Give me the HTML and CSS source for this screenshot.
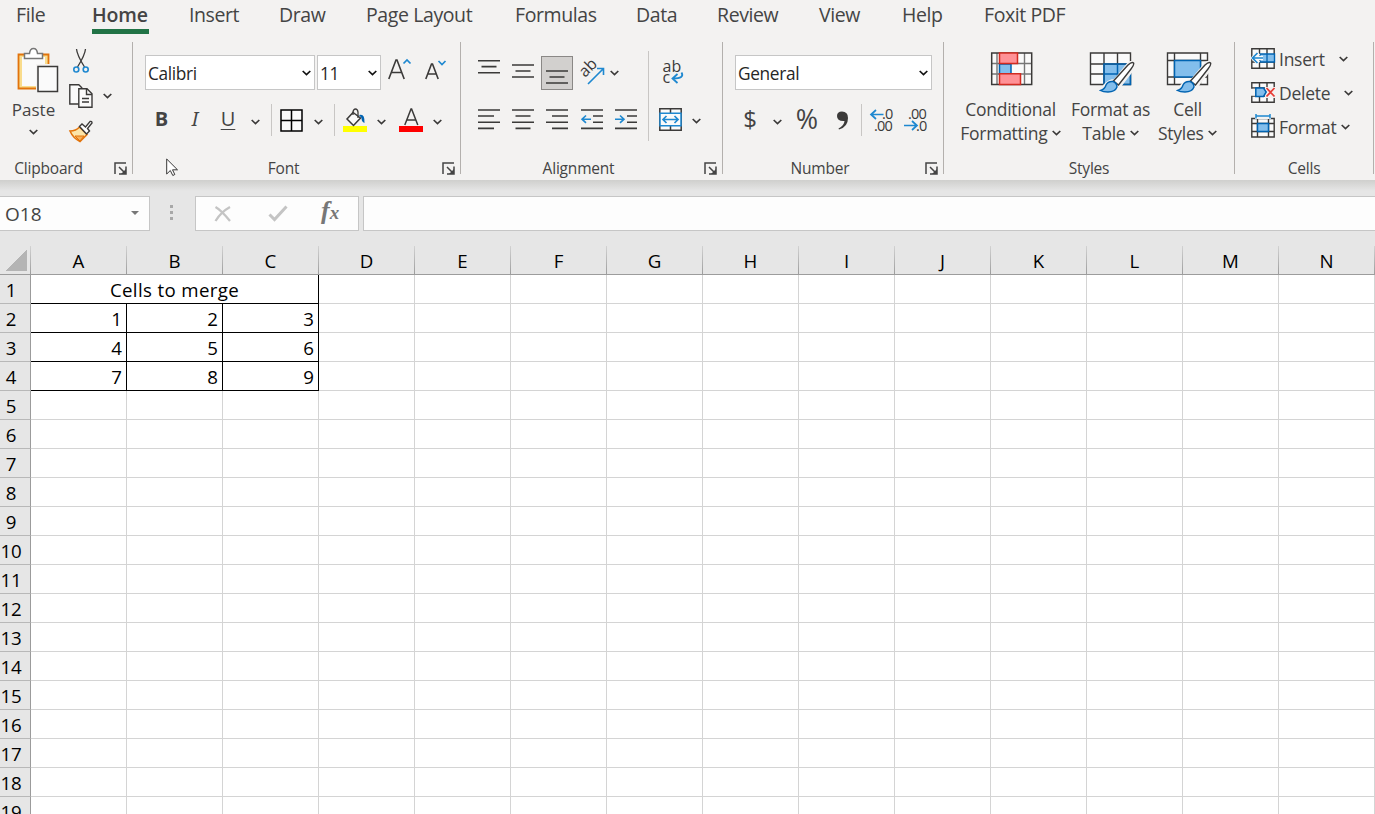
FILE: index.html
```html
<!DOCTYPE html>
<html lang="en">
  <head>
    <meta charset="UTF-8" />
    <meta name="viewport" content="width=device-width, initial-scale=1.0" />
    <title>Spreadsheet</title>
    <link rel="stylesheet" href="styles.css">
  </head>
  <body>
    <svg class="symbols" width="0" height="0">
      <symbol id="chev" viewBox="0 0 9 6"><path d="M.7 1l3.8 3.6L8.300 1" fill="none" stroke="currentColor" stroke-width="1.7" /></symbol>
      <symbol id="launch" viewBox="0 0 13 13"><path d="M1 12V1h11M5 5l6 6M12 4.500V12H5" fill="none" stroke="#444" stroke-width="1.500" /><path d="M12 7v5H7z" fill="#444" /></symbol>
      <symbol id="brush" viewBox="0 0 36 32">
        <path d="M16 20L30 3Q34 0 35 2Q36 4 34 7L21 24Q18 30 10 31H1Q5 29 6 25Q10 20 16 20z" fill="#f3f2f1" stroke="#f3f2f1" stroke-width="4" />
        <path d="M14.500 20L29 4Q33 .5 34.500 2Q35.500 3.500 32 8L19.500 24z" fill="#fff" stroke="#3b3a39" stroke-width="1.400" />
        <path d="M1.500 29.500Q6 28 7 24Q9 20 14 20.500Q18 22 18 26Q16 31 9 31Q4 31 1.500 29.500z" fill="#83beec" stroke="#0063b1" stroke-width="1.400" />
      </symbol>
    </svg>

    <nav class="tabs">
      <a>File</a>
      <a class="active">Home</a>
      <a>Insert</a>
      <a>Draw</a>
      <a>Page Layout</a>
      <a>Formulas</a>
      <a>Data</a>
      <a>Review</a>
      <a>View</a>
      <a>Help</a>
      <a>Foxit PDF</a>
    </nav>

    <div class="ribbon">
      <section class="group clipboard">
        <div class="group-body">
          <div class="paste">
            <svg width="42" height="46" viewBox="0 0 42 46">
              <path d="M1.500 7.500h30v34h-30z" fill="#f9dc8c" stroke="#e2730b" stroke-width="1.800" />
              <path d="M5 10h23v29H5z" fill="#fafafa" />
              <path d="M19 17h23v29H19z" fill="#f3f2f1" />
              <path d="M7.500 11.500V6.500h5Q13 1.500 16.500 1.500T20.500 6.500h5v5z" fill="#fff" stroke="#777" stroke-width="1.500" />
              <path d="M21 19.500h19.500v25H21z" fill="#fafafa" stroke="#3b3a39" stroke-width="1.500" />
            </svg>
            <span>Paste</span>
            <svg class="chev"><use href="#chev" /></svg>
          </div>
          <div class="clip-tools">
            <svg width="16" height="24" viewBox="0 0 16 24" fill="none" stroke="#3b3a39" stroke-width="1.300">
              <path d="M3.500 0Q4 6 11.500 18M12.500 0Q12 6 4.500 18" />
              <g stroke="#1e88d0" stroke-width="1.600"><circle cx="3.300" cy="20.500" r="2.500" /><circle cx="12.700" cy="20.500" r="2.500" /></g>
            </svg>
            <div class="copy">
              <svg width="24" height="24" viewBox="0 0 24 24" fill="#fafafa" stroke="#3b3a39" stroke-width="1.400">
                <path d="M.8 .8h9l3 3V20H.8z" /><path d="M9.800 4.800h8.200l5 5V23.200H9.800z" /><path d="M17.500 5v5.500h5.500M13 14.500h7M13 18h7" fill="none" />
              </svg>
              <svg class="chev"><use href="#chev" /></svg>
            </div>
            <svg width="24" height="23" viewBox="0 0 24 23">
              <path d="M1 11Q7 11 10.500 7L18 14.500L11 21.500Q4 18 1 11z" fill="#fce5a8" stroke="#e2730b" stroke-width="1.600" />
              <path d="M6 16h9l-4 5z" fill="#f5b05a" stroke="#e2730b" />
              <path d="M10.500 6.500l2.500-2.500 3.500 3L21 1.500Q23 .8 23 3L18.500 8.500l2 2.500-3 3z" fill="#fff" stroke="#3b3a39" stroke-width="1.400" />
            </svg>
          </div>
        </div>
        <div class="group-label"><span>Clipboard</span><svg class="launch"><use href="#launch" /></svg></div>
      </section>

      <section class="group font">
        <div class="group-body">
          <div class="row">
            <div class="select family">Calibri<svg class="chev"><use href="#chev" /></svg></div>
            <div class="select size">11<svg class="chev"><use href="#chev" /></svg></div>
            <svg class="grow" width="24" height="24" viewBox="0 0 24 24" fill="none">
              <path d="M.8 21L8 2h1l7.200 19M3.300 14.500h10.400" stroke="#3b3a39" stroke-width="1.600" /><path d="M15.500 5.500L19 2l3.500 3.500" stroke="#1e88d0" stroke-width="1.700" />
            </svg>
            <svg class="shrink" width="22" height="24" viewBox="0 0 22 24" fill="none">
              <path d="M.8 21L6.500 6h1L13.200 21M3 16h8" stroke="#3b3a39" stroke-width="1.600" /><path d="M13.500 3l3.500 3.500L20.500 3" stroke="#1e88d0" stroke-width="1.700" />
            </svg>
          </div>
          <div class="font-tools">
            <b>B</b>
            <i>I</i>
            <u>U</u>
            <svg class="chev"><use href="#chev" /></svg>
            <span class="sep"></span>
            <svg width="23" height="23" viewBox="0 0 23 23"><path d="M1 1h21v21H1zM11.500 1v21M1 11.500h21" fill="#fafafa" stroke="#000" stroke-width="1.500" /></svg>
            <svg class="chev"><use href="#chev" /></svg>
            <span class="sep"></span>
            <svg width="24" height="25" viewBox="0 0 24 25">
              <path d="M0 18h24v6H0z" fill="#ff0" />
              <path d="M10 4.500L4 11l6.500 6.500L17.500 10z" fill="#fafafa" stroke="#3b3a39" stroke-width="1.500" />
              <path d="M10 7V4Q10.500 1 12.500 1T15 4v6" fill="none" stroke="#3b3a39" stroke-width="1.300" />
              <path d="M16 7Q22 5 21.500 15Q18.500 14 18.500 10z" fill="#0063b1" />
            </svg>
            <svg class="chev"><use href="#chev" /></svg>
            <svg width="24" height="25" viewBox="0 0 24 25">
              <path d="M0 18h24v6H0z" fill="#f00" /><path d="M5.800 17L12 1h.6l6.200 16M8 12h8.500" fill="none" stroke="#3b3a39" stroke-width="1.500" />
            </svg>
            <svg class="chev"><use href="#chev" /></svg>
          </div>
        </div>
        <div class="group-label"><span>Font</span><svg class="launch"><use href="#launch" /></svg></div>
      </section>

      <section class="group alignment">
        <div class="group-body">
          <div class="align-left">
            <div class="align-tools">
              <svg class="lines"><path d="M0 2.700h22M3.500 8.600h15M0 14.700h22" /></svg>
              <svg class="lines"><path d="M0 7h22M3.500 13h15M0 19h22" /></svg>
              <span class="pressed"><svg class="lines"><path d="M0 13h22M3.500 19h15M0 25h22" /></svg></span>
              <svg width="25" height="26" viewBox="0 0 25 26">
                <text x="5" y="18" transform="rotate(-45 5 18)" font-size="16" fill="#3b3a39">ab</text>
                <path d="M8 24L23.500 8.500M17 8.500h6.500v6.500" fill="none" stroke="#1e88d0" stroke-width="1.600" />
              </svg>
              <svg class="chev"><use href="#chev" /></svg>
            </div>
            <div class="align-tools">
              <svg class="lines"><path d="M0 4h22M0 10h16M0 16.200h22M0 22.400h16" /></svg>
              <svg class="lines"><path d="M0 4h22M3.500 10h15M0 16.200h22M3.500 22.400h15" /></svg>
              <svg class="lines"><path d="M0 4h22M6 10h16M0 16.200h22M6 22.400h16" /></svg>
              <svg class="lines"><path d="M0 4h22M12 10h10M12 16.200h10M0 22.400h22" /><path class="blue" d="M1 13.200h9M5 9.500l-4 3.700 4 3.700" /></svg>
              <svg class="lines"><path d="M0 4h22M12 10h10M12 16.200h10M0 22.400h22" /><path class="blue" d="M0 13.200h9M5 9.500l4 3.700-4 3.700" /></svg>
            </div>
          </div>
          <span class="tall-sep"></span>
          <div class="align-right">
            <svg width="24" height="26" viewBox="0 0 24 26">
              <text x="1.500" y="13" font-size="16" fill="#3b3a39">ab</text><text x="1.500" y="23.500" font-size="16" fill="#3b3a39">c</text>
              <path d="M20.500 13.500Q24 19.500 12 19.500M16.500 15l-5 4.500 5 4.500" fill="none" stroke="#1e88d0" stroke-width="1.800" />
            </svg>
            <div class="merge">
              <svg width="23" height="23" viewBox="0 0 23 23">
                <path d="M.8 .8h21.400v21.400H.8zM11.500 1v4M11.500 18v4" fill="#fafafa" stroke="#3b3a39" stroke-width="1.500" />
                <path d="M1 5.200h21v12.500H1z" fill="#fafafa" stroke="#1e88d0" stroke-width="1.500" />
                <path d="M4 11.500h15M7.500 8L4 11.500 7.500 15M15.500 8l3.500 3.500-3.500 3.500" fill="none" stroke="#1e88d0" stroke-width="1.700" />
              </svg>
              <svg class="chev"><use href="#chev" /></svg>
            </div>
          </div>
        </div>
        <div class="group-label"><span>Alignment</span><svg class="launch"><use href="#launch" /></svg></div>
      </section>

      <section class="group number">
        <div class="group-body">
          <div class="row">
            <div class="select format">General<svg class="chev"><use href="#chev" /></svg></div>
          </div>
          <div class="number-tools">
            <span class="dollar">$</span>
            <svg class="chev"><use href="#chev" /></svg>
            <span class="percent">%</span>
            <svg width="13" height="19" viewBox="0 0 13 19"><path d="M1 5Q1 .5 6 .5Q12 .5 12 7Q12 16 3 18.500L2.500 17.500Q8 15 8.500 10Q1 10.500 1 5z" fill="#3b3a39" /></svg>
            <span class="sep"></span>
            <svg class="decimals" width="24" height="26" viewBox="0 0 24 26"><text x="12" y="11.500">.0</text><text x="4" y="23.500">.00</text><path d="M1 7.500h12.500M6 3L1 7.500l5 4.500" /></svg>
            <svg class="decimals" width="24" height="26" viewBox="0 0 24 26"><text x="4" y="11.500">.00</text><text x="12" y="23.500">.0</text><path d="M0 18.500h12.500M8 14l5 4.500-5 4.500" /></svg>
          </div>
        </div>
        <div class="group-label"><span>Number</span><svg class="launch"><use href="#launch" /></svg></div>
      </section>

      <section class="group styles">
        <div class="group-body">
          <div class="big conditional">
            <svg width="46" height="44" viewBox="0 0 46 44">
              <path d="M2.700 3h40v31.500h-40z" fill="#fafafa" />
              <path d="M8 3v31M35.500 3v31M3 13.500h40M3 24h40" stroke="#777" stroke-width="1.400" />
              <path d="M2.700 3h40v31.500h-40z" fill="none" stroke="#3b3a39" stroke-width="1.500" />
              <path d="M10.500 14h11.500v10H10.500z" fill="#83beec" stroke="#0063b1" stroke-width="1.500" />
              <path d="M10.500 3h18v10.500h-18zM10.500 23.800h21v10.700h-21z" fill="#ff9196" stroke="#d22b21" stroke-width="1.500" />
            </svg>
            <span>Conditional</span>
            <span>Formatting <svg class="chev"><use href="#chev" /></svg></span>
          </div>
          <div class="big table">
            <svg width="46" height="44" viewBox="0 0 46 44">
              <path d="M1.500 3h40v31.500h-40z" fill="#fafafa" />
              <path d="M15 14h27v20.500H15z" fill="#83beec" />
              <path d="M1.500 3h40v31.500h-40zM15 3v31M28.500 3v11M1.500 14h40M1.500 24h13.500" fill="none" stroke="#3b3a39" stroke-width="1.400" />
              <path d="M15 14h26.500v20.500H15zM28.500 14v20M15 24h26" fill="none" stroke="#0063b1" stroke-width="1.500" />
              <use href="#brush" x="10" y="11" width="36" height="32" />
            </svg>
            <span>Format as</span>
            <span>Table <svg class="chev"><use href="#chev" /></svg></span>
          </div>
          <div class="big cell">
            <svg width="46" height="44" viewBox="0 0 46 44">
              <path d="M1.500 3h40v31.500h-40zM8.500 3v31M34.500 3v31M1.500 10.500h40M1.500 27h40" fill="#fafafa" stroke="#3b3a39" stroke-width="1.400" />
              <path d="M8.500 10.500h26V27h-26z" fill="#83beec" stroke="#0063b1" stroke-width="1.500" />
              <use href="#brush" x="10" y="11" width="36" height="32" />
            </svg>
            <span>Cell</span>
            <span>Styles <svg class="chev"><use href="#chev" /></svg></span>
          </div>
        </div>
        <div class="group-label"><span>Styles</span></div>
      </section>

      <section class="group cells">
        <div class="group-body">
          <div class="cell-button insert">
            <svg width="24" height="24" viewBox="0 0 24 24">
              <path d="M.8 2.700h22.400v19.600H.8zM8.500 3v19M16 3v19M1 16h22" fill="#fafafa" stroke="#3b3a39" stroke-width="1.400" />
              <path d="M9 8h14.500v8H9z" fill="#83beec" stroke="#0063b1" stroke-width="1.400" />
              <path d="M16 8v8" stroke="#0063b1" stroke-width="1.300" />
              <path d="M12 12H2.500M7.500 7l-5 5 5 5" fill="none" stroke="#fafafa" stroke-width="4.500" />
              <path d="M12 12H1.500M6.500 7l-5 5 5 5" fill="none" stroke="#1e88d0" stroke-width="1.700" />
            </svg>
            <span>Insert</span><svg class="chev"><use href="#chev" /></svg>
          </div>
          <div class="cell-button delete">
            <svg width="24" height="24" viewBox="0 0 24 24">
              <path d="M.8 2.700h22.400v19.600H.8zM8.500 3v19M16 3v19M1 8h22M1 16h22" fill="#fafafa" stroke="#3b3a39" stroke-width="1.400" />
              <path d="M0 8.700h4v7H0zM14 7h10v11H14z" fill="#f3f2f1" />
              <path d="M4.800 8h7.700l2.700 4-2.700 4.500H4.800z" fill="#83beec" stroke="#0063b1" stroke-width="1.500" />
              <path d="M15.500 8l8 8.500M23.500 8l-8 8.500" stroke="#e83c35" stroke-width="1.800" />
            </svg>
            <span>Delete</span><svg class="chev"><use href="#chev" /></svg>
          </div>
          <div class="cell-button format">
            <svg width="24" height="24" viewBox="0 0 24 24">
              <path d="M.8 4.500h22.400v18.500H.8zM6.500 5v18M17.500 5v18M1 9.500h22M1 17.500h22" fill="#fafafa" stroke="#3b3a39" stroke-width="1.400" />
              <path d="M4 0h16v5H4z" fill="#f3f2f1" />
              <path d="M6.500 9.500h11v8h-11z" fill="#83beec" stroke="#0063b1" stroke-width="1.500" />
              <path d="M5 2h14M5 0v4.500M19 0v4.500" stroke="#1e88d0" stroke-width="1.500" />
            </svg>
            <span>Format</span><svg class="chev"><use href="#chev" /></svg>
          </div>
        </div>
        <div class="group-label"><span>Cells</span></div>
      </section>

      <svg class="pointer" width="13" height="19" viewBox="0 0 13 19"><path d="M.7 1v15l3.600-3.500 2.500 5 2-1-2.300-4.700h5z" fill="#fff" stroke="#222" stroke-width=".9" /></svg>
    </div>

    <div class="formula-bar">
      <div class="name-box">O18<span class="arrow"></span></div>
      <div class="dots"><i></i><i></i><i></i></div>
      <div class="formula-buttons">
        <svg width="18" height="16" viewBox="0 0 18 16"><path d="M1.500 1Q7 4 16 15M16 1Q7 6 1.500 15" fill="none" stroke="#c4c4c4" stroke-width="2.300" /></svg>
        <svg width="20" height="17" viewBox="0 0 20 17"><path d="M1.500 9.500l5 5L18.500 1.500" fill="none" stroke="#c4c4c4" stroke-width="3" /></svg>
        <span class="fx">f<small>x</small></span>
      </div>
      <div class="formula-input"></div>
    </div>

    <table class="sheet">
      <thead>
        <tr id="letters"><th class="corner"></th></tr>
      </thead>
      <tbody id="rows"></tbody>
    </table>

    <script>
      const letters = "ABCDEFGHIJKLMN".split("");
      const data = {
        2: [1, 2, 3],
        3: [4, 5, 6],
        4: [7, 8, 9],
      };

      for (const letter of letters) {
        const th = document.createElement("th");
        th.textContent = letter;
        document.getElementById("letters").appendChild(th);
      }

      for (let r = 1; r <= 19; r++) {
        const tr = document.createElement("tr");
        const th = document.createElement("th");
        th.textContent = r;
        tr.appendChild(th);
        for (let c = 0; c < letters.length; c++) {
          const td = document.createElement("td");
          if (r === 1 && c === 0) {
            td.colSpan = 3;
            td.className = "filled merged";
            td.textContent = "Cells to merge";
            c = 2;
          } else if (data[r] && c < 3) {
            td.className = "filled";
            td.textContent = data[r][c];
          }
          tr.appendChild(td);
        }
        document.getElementById("rows").appendChild(tr);
      }
    </script>
  </body>
</html>
```
FILE: styles.css
```css
* {
  box-sizing: border-box;
}
body {
  margin: 0;
  height: 814px;
  overflow: hidden;
  background: #e6e6e6;
  font-family: "Open Sans", "Noto Sans", sans-serif;
  color: #444;
}
svg {
  display: block;
  flex: none;
  overflow: visible;
}
.symbols {
  position: absolute;
}
.chev {
  width: 9px;
  height: 6px;
  color: #3b3a39;
}

/* tabs */
.tabs {
  display: grid;
  grid-template-columns: 76px 97px 90px 87px 149px 121px 81px 102px 83px 82px 100px;
  height: 42px;
  padding-left: 16px;
  background: #f3f2f1;
  font-size: 19.5px;
  letter-spacing: -0.4px;
  line-height: 30px;
  white-space: nowrap;
}
.tabs a {
  justify-self: start;
  height: 34px;
}
.tabs .active {
  width: 57px;
  font-weight: 600;
  letter-spacing: -0.1px;
  border-bottom: 5px solid #217346;
}

/* ribbon */
.ribbon {
  position: relative;
  display: flex;
  height: 138px;
  background: #f3f2f1;
}
.group {
  display: flex;
  flex-direction: column;
  height: 132px;
  border-right: 1px solid #b3b0ad;
}
.clipboard { width: 133px; }
.font { width: 328px; }
.alignment { width: 262px; }
.number { width: 221px; }
.styles { width: 291px; }
.cells { width: 139px; }
.group-body {
  flex: none;
  height: 117px;
}
.group-label {
  display: flex;
  flex: none;
  align-items: center;
  height: 19px;
  font-size: 15.5px;
  letter-spacing: -0.2px;
  line-height: 19px;
}
.group-label span {
  flex: 1;
  text-align: center;
}
.launch {
  width: 13px;
  height: 13px;
  margin: 0 5px 0 8px;
}

.clipboard .group-body {
  display: flex;
}
.clipboard .group-label {
  margin-left: -9px;
}
.paste {
  display: flex;
  flex-direction: column;
  align-items: center;
  width: 67px;
  padding-top: 5px;
  font-size: 17px;
  line-height: 24px;
}
.paste > svg:first-child {
  margin: 0 0 5px 8px;
}
.paste .chev {
  margin-top: 7px;
}
.clip-tools {
  padding: 7px 0 0 2px;
}
.clip-tools > svg:first-child {
  margin: 0 0 11px 4px;
}
.copy {
  display: flex;
  align-items: center;
  gap: 10px;
  margin-bottom: 12px;
}

.row {
  display: flex;
  align-items: center;
  height: 48px;
  padding: 13px 0 0 12px;
}
.select {
  display: flex;
  align-items: center;
  justify-content: space-between;
  height: 35px;
  padding: 1px 3px 0 2px;
  border: 1px solid #c6c6c6;
  background: #fff;
  color: #262626;
  font-size: 17.3px;
  letter-spacing: -0.35px;
}
.select .chev {
  color: #111;
}
.family { width: 170px; }
.size { width: 64px; margin-left: 2px; }
.format.select { width: 197px; }
.grow { margin: -5px 0 0 7px; }
.shrink { margin: -5px 0 0 13px; }
.font-tools,
.align-tools,
.number-tools {
  display: grid;
  align-items: center;
  justify-items: center;
  height: 34px;
}
.font-tools {
  grid-template-columns: 33px 34px 32px 22px 11px 28px 26px 7px 34px 18px 42px 10px;
  margin: 13px 0 0 12px;
  font-size: 20px;
}
.font-tools .chev,
.number-tools .chev {
  margin-top: 3px;
}
.font-tools b,
.font-tools i,
.font-tools u {
  margin-top: -3px;
  line-height: 28px;
}
.font-tools i {
  font-family: "Noto Sans", serif;
}
.font-tools u {
  text-underline-offset: 3px;
  text-decoration-thickness: 1px;
}
.sep {
  width: 1px;
  height: 32px;
  background: #c8c6c4;
}

.alignment .group-body {
  display: flex;
}
.align-left {
  padding: 14px 0 0 11px;
}
.align-tools {
  grid-template-columns: 34px 34px 34px 36px 8px;
  width: 170px;
}
.align-tools + .align-tools {
  grid-template-columns: 34px 34px 34px 36px 32px;
  margin-top: 14px;
}
.lines {
  width: 22px;
  height: 30px;
  fill: none;
  stroke: #3b3a39;
  stroke-width: 1.6;
}
.lines .blue {
  stroke: #1e88d0;
}
.pressed {
  width: 32px;
  height: 34px;
  padding: 1px 4px;
  border: 1px solid #8a8886;
  background: #d2d0ce;
}
.tall-sep {
  width: 1px;
  height: 90px;
  margin: 9px 0 0 6px;
  background: #c8c6c4;
}
.align-right {
  padding: 17px 0 0 10px;
}
.align-right > svg {
  margin-left: 2px;
}
.merge {
  display: flex;
  align-items: center;
  gap: 10px;
  margin-top: 23px;
}
.merge .chev {
  margin-top: 3px;
}

.number-tools {
  grid-template-columns: 30px 24px 36px 34px 4px 38px 30px;
  margin: 13px 0 0 12px;
}
.dollar {
  font-size: 24px;
  line-height: 30px;
  margin-top: -2px;
}
.percent {
  font-size: 27px;
  line-height: 30px;
  margin-top: -2px;
}
.decimals text {
  font-size: 14.5px;
  letter-spacing: -0.8px;
  fill: #3b3a39;
}
.decimals path {
  fill: none;
  stroke: #1e88d0;
  stroke-width: 1.7;
}

.styles .group-body {
  display: flex;
}
.big {
  display: flex;
  flex-direction: column;
  align-items: center;
  padding-top: 8px;
  font-size: 17.5px;
  letter-spacing: -0.25px;
  line-height: 24px;
  white-space: nowrap;
}
.big > svg {
  margin: 0 0 3px 3px;
}
.big .chev {
  display: inline-block;
  vertical-align: 4px;
}
.conditional { width: 103px; margin-left: 15px; }
.table { width: 97px; }
.cell { width: 57px; }

.cells .group-body {
  padding: 0 0 0 16px;
}
.cell-button {
  display: flex;
  align-items: center;
  height: 34px;
  font-size: 17.5px;
  letter-spacing: -0.25px;
}
.cell-button > svg:first-child {
  margin-top: -2px;
}
.cell-button span {
  margin: -1px 0 0 4px;
}
.cell-button .chev {
  margin-top: -1px;
}
.insert .chev { margin-left: 14px; }
.delete .chev { margin-left: 14px; }
.cell-button.format .chev { margin-left: 5px; }

.pointer {
  position: absolute;
  left: 166px;
  top: 116px;
}

/* formula bar */
.formula-bar {
  display: flex;
  height: 66px;
  padding-top: 16px;
  background: linear-gradient(#cfcfcd, #e6e6e6 11px);
}
.name-box,
.formula-buttons,
.formula-input {
  display: flex;
  align-items: center;
  height: 35px;
  border: 1px solid #c6c6c6;
  background: #fdfdfd;
}
.name-box {
  justify-content: space-between;
  width: 150px;
  padding: 0 10px 0 5px;
  border-left: 0;
  font-size: 19px;
}
.arrow {
  margin-top: -2px;
  border: 4px solid transparent;
  border-top-color: #777;
  border-bottom: 0;
}
.dots {
  display: flex;
  flex-direction: column;
  align-items: center;
  gap: 3px;
  width: 45px;
  padding: 9px 2px 0 0;
}
.dots i {
  width: 3px;
  height: 3px;
  background: #a8a8a8;
}
.formula-buttons {
  gap: 36px;
  width: 164px;
  padding-left: 18px;
}
.fx {
  margin: -4px 0 0 -3px;
  font: italic 26px/30px "Liberation Serif", serif;
  font-weight: bold;
  color: #777;
}
.fx small {
  font-size: 19px;
}
.formula-input {
  flex: 1;
  margin-left: 4px;
  border-right: 0;
}

/* sheet */
.sheet {
  width: 1375px;
  table-layout: fixed;
  border-collapse: separate;
  border-spacing: 0;
  background: #fff;
  color: #000;
  font-size: 18.7px;
}
.sheet th,
.sheet td {
  width: 96px;
  height: 29px;
  padding: 0;
  border-right: 1px solid #d4d4d4;
  border-bottom: 1px solid #d4d4d4;
  line-height: 26px;
}
.sheet th {
  background: #e6e6e6;
  border-color: #9b9b9b;
  font-weight: normal;
}
.sheet thead th {
  padding-top: 2px;
  border-right: 1px solid;
  border-image: linear-gradient(#d4d4d4, #9b9b9b) 1;
}
.sheet tbody th {
  padding: 1px 8px 0 0;
  border-bottom-color: #b8b8b8;
  letter-spacing: -0.3px;
  text-align: center;
}
.sheet .corner {
  width: 31px;
  background: linear-gradient(135deg, transparent 50%, #b4b4b4 50%) 6px 4px / 21px 21px no-repeat #e6e6e6;
}
.sheet .filled {
  padding: 1px 4px 0 0;
  border-color: #000;
  text-align: right;
}
.sheet .merged {
  padding-right: 0;
  letter-spacing: 0.35px;
  text-align: center;
}
```
